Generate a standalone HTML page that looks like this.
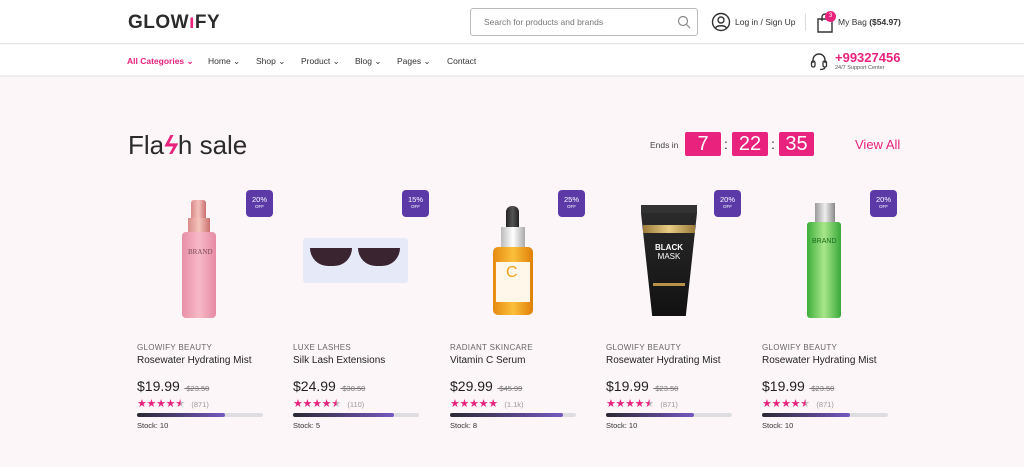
<!DOCTYPE html>
<html><head><meta charset="utf-8"><style>
*{margin:0;padding:0;box-sizing:border-box}
body{width:1024px;height:467px;overflow:hidden;background:#fdf6f9;font-family:"Liberation Sans",sans-serif;position:relative;color:#222}
.a{position:absolute}
.hdr{left:0;top:0;width:1024px;height:44px;background:#fff;border-bottom:1px solid #e6e6e6}
.nav{left:0;top:45px;width:1024px;height:32px;background:#fff;border-bottom:2px solid #eee}
.nav span{position:absolute;top:11px;font-size:8.5px;color:#333}
.badge{width:27px;height:27px;background:#5b3aa8;border-radius:4px;color:#fff;text-align:center;font-size:7.5px;padding-top:5px;line-height:9px}
.badge small{display:block;font-size:4.5px;line-height:6px}
.brand{font-size:8px;color:#666;letter-spacing:.3px}
.name{font-size:10px;color:#222}
.price{font-size:14px;color:#222}
.old{font-size:7.5px;color:#777;text-decoration:line-through}
.stars{font-size:11px;color:#e8227d;letter-spacing:-.3px;font-family:"DejaVu Sans",sans-serif}
.half{background:linear-gradient(90deg,#e8227d 55%,#bbb 55%);-webkit-background-clip:text;background-clip:text;color:transparent}
.cnt{font-size:7.5px;color:#999}
.bar{width:126px;height:4px;border-radius:2px;background:#dddde2}
.bar i{display:block;height:4px;border-radius:2px;background:linear-gradient(90deg,#2a2a33,#7657c0)}
.stock{font-size:7.5px;color:#333}
.cd{top:132px;height:24px;background:#e8227d;color:#fff;font-size:20px;text-align:center;line-height:24px;border-radius:2px}
</style></head><body>
<div class="a hdr"></div>
<div class="a" style="left:128px;top:12px;font-size:19px;font-weight:bold;color:#2b2b2b;letter-spacing:.5px">GLOW<span style="color:#e8227d">ı</span>FY</div>
<div class="a" style="left:470px;top:8px;width:228px;height:28px;border:1px solid #bbb;border-radius:3px"></div>
<div class="a" style="left:484px;top:17px;font-size:8.5px;color:#777">Search for products and brands</div>
<svg class="a" style="left:677px;top:15px" width="14" height="14" viewBox="0 0 14 14"><circle cx="6" cy="6" r="4.5" fill="none" stroke="#888" stroke-width="1.2"/><path d="M9.5 9.5L13 13" stroke="#888" stroke-width="1.2"/></svg>
<svg class="a" style="left:711px;top:12px" width="20" height="20" viewBox="0 0 20 20"><circle cx="10" cy="10" r="8.5" fill="none" stroke="#333" stroke-width="1.4"/><circle cx="10" cy="8" r="3" fill="none" stroke="#333" stroke-width="1.4"/><path d="M4.5 16c1.5-3 9.5-3 11 0" fill="none" stroke="#333" stroke-width="1.4"/></svg>
<div class="a" style="left:735px;top:17px;font-size:8.5px;color:#333">Log in / Sign Up</div>
<div class="a" style="left:805px;top:14px;width:1px;height:17px;background:#ddd"></div>
<svg class="a" style="left:816px;top:13px" width="18" height="20" viewBox="0 0 18 20"><path d="M2 6h14v13H2z" fill="none" stroke="#333" stroke-width="1.4"/><path d="M6 8V4a3 3 0 0 1 6 0v4" fill="none" stroke="#333" stroke-width="1.4"/></svg>
<div class="a" style="left:825px;top:11px;width:11px;height:11px;border-radius:50%;background:#e8227d;color:#fff;font-size:6px;text-align:center;line-height:11px">3</div>
<div class="a" style="left:838px;top:17px;font-size:8.5px;color:#333">My Bag <b>($54.97)</b></div>
<div class="a nav">
<span style="left:127px;color:#e8227d;font-weight:bold">All Categories ⌄</span>
<span style="left:208px">Home ⌄</span>
<span style="left:256px">Shop ⌄</span>
<span style="left:301px">Product ⌄</span>
<span style="left:355px">Blog ⌄</span>
<span style="left:397px">Pages ⌄</span>
<span style="left:447px">Contact</span>
</div>
<svg class="a" style="left:810px;top:51px" width="18" height="20" viewBox="0 0 18 20"><path d="M3 12V9a6 6 0 0 1 12 0v3" fill="none" stroke="#333" stroke-width="1.4"/><rect x="1.5" y="10" width="3.5" height="6" rx="1.5" fill="none" stroke="#333" stroke-width="1.3"/><rect x="13" y="10" width="3.5" height="6" rx="1.5" fill="none" stroke="#333" stroke-width="1.3"/><path d="M15 16c0 2-2 2.5-5 2.5" fill="none" stroke="#333" stroke-width="1.3"/></svg>
<div class="a" style="left:835px;top:50px;font-size:13px;font-weight:bold;color:#e8227d">+99327456</div>
<div class="a" style="left:835px;top:65px;font-size:5.5px;color:#555">24/7 Support Center</div>

<div class="a" style="left:128px;top:130px;font-size:26px;color:#2b2b2b">Fla<span style="color:#e8227d;font-style:italic;font-weight:bold">ϟ</span>h sale</div>
<div class="a" style="left:650px;top:140px;font-size:8.5px;color:#444">Ends in</div>
<div class="a cd" style="left:685px;width:36px">7</div>
<div class="a" style="left:724px;top:136px;font-size:14px;color:#333">:</div>
<div class="a cd" style="left:732px;width:36px">22</div>
<div class="a" style="left:771px;top:136px;font-size:14px;color:#333">:</div>
<div class="a cd" style="left:779px;width:35px">35</div>
<div class="a" style="left:855px;top:137px;font-size:13px;color:#e8227d">View All</div>

<div class="a" style="left:191px;top:200px;width:15px;height:20px;background:linear-gradient(90deg,#d98a88,#f4c2bb,#c9706e);border-radius:3px 3px 0 0"></div>
<div class="a" style="left:188px;top:218px;width:22px;height:14px;background:linear-gradient(90deg,#d88b88,#f6c5bd,#c9706e)"></div>
<div class="a" style="left:182px;top:232px;width:34px;height:86px;background:linear-gradient(90deg,#e78fa6,#f7b9c8,#e78aa2);border-radius:4px"></div>
<div class="a" style="left:188px;top:248px;font-size:7px;font-family:'Liberation Serif',serif;color:#7a4a55">BRAND</div>

<div class="a" style="left:303px;top:238px;width:105px;height:45px;background:#e6e9f8;border-radius:3px"></div>
<div class="a" style="left:310px;top:248px;width:42px;height:18px;background:#3a2430;border-radius:0 0 20px 20px"></div>
<div class="a" style="left:358px;top:248px;width:42px;height:18px;background:#3a2430;border-radius:0 0 20px 20px"></div>

<div class="a" style="left:506px;top:206px;width:13px;height:22px;background:linear-gradient(90deg,#222,#555,#222);border-radius:6px 6px 0 0"></div>
<div class="a" style="left:501px;top:227px;width:24px;height:20px;background:linear-gradient(90deg,#bbb,#fff,#aaa)"></div>
<div class="a" style="left:493px;top:247px;width:40px;height:68px;background:linear-gradient(90deg,#e58a10,#fbbf3c,#e08008);border-radius:5px"></div>
<div class="a" style="left:496px;top:262px;width:34px;height:40px;background:#fff7ea"></div>
<div class="a" style="left:506px;top:264px;font-size:16px;color:#f2a21b">C</div>

<div class="a" style="left:641px;top:205px;width:56px;height:8px;background:#333"></div>
<div class="a" style="left:641px;top:213px;width:56px;height:103px;background:linear-gradient(180deg,#2a2a2a,#111);clip-path:polygon(0 0,100% 0,80% 100%,20% 100%)"></div>
<div class="a" style="left:643px;top:225px;width:52px;height:8px;background:linear-gradient(90deg,#9c7a3a,#e9cc84,#9c7a3a)"></div>
<div class="a" style="left:653px;top:243px;font-size:8px;font-weight:bold;color:#fff;width:32px;text-align:center;line-height:9px">BLACK<br><span style="font-weight:normal">MASK</span></div>
<div class="a" style="left:653px;top:283px;width:32px;height:3px;background:#b8924a"></div>

<div class="a" style="left:815px;top:203px;width:20px;height:19px;background:linear-gradient(90deg,#999,#eee,#888)"></div>
<div class="a" style="left:807px;top:222px;width:34px;height:96px;background:linear-gradient(90deg,#3fae3c,#a8e68a,#3aa83a);border-radius:3px"></div>
<div class="a" style="left:812px;top:238px;font-size:7px;color:#1a6a1a">BRAND</div>

<div class="a badge" style="left:246px;top:190px">20%<small>OFF</small></div>
<div class="a badge" style="left:402px;top:190px">15%<small>OFF</small></div>
<div class="a badge" style="left:558px;top:190px">25%<small>OFF</small></div>
<div class="a badge" style="left:714px;top:190px">20%<small>OFF</small></div>
<div class="a badge" style="left:870px;top:190px">20%<small>OFF</small></div>

<div class="a" style="left:137px;top:343px">
<div class="brand">GLOWIFY BEAUTY</div><div class="name" style="margin-top:3px">Rosewater Hydrating Mist</div>
<div style="margin-top:12px"><span class="price">$19.99</span> <span class="old">&nbsp;$23.50</span></div>
<div style="line-height:13px"><span class="stars">★★★★<span class="half">★</span></span> <span class="cnt">&nbsp;(871)</span></div>
<div class="bar" style="margin-top:2px"><i style="width:88px"></i></div><div class="stock" style="margin-top:4px">Stock: 10</div></div>

<div class="a" style="left:293px;top:343px">
<div class="brand">LUXE LASHES</div><div class="name" style="margin-top:3px">Silk Lash Extensions</div>
<div style="margin-top:12px"><span class="price">$24.99</span> <span class="old">&nbsp;$30.50</span></div>
<div style="line-height:13px"><span class="stars">★★★★<span class="half">★</span></span> <span class="cnt">&nbsp;(110)</span></div>
<div class="bar" style="margin-top:2px"><i style="width:101px"></i></div><div class="stock" style="margin-top:4px">Stock: 5</div></div>

<div class="a" style="left:450px;top:343px">
<div class="brand">RADIANT SKINCARE</div><div class="name" style="margin-top:3px">Vitamin C Serum</div>
<div style="margin-top:12px"><span class="price">$29.99</span> <span class="old">&nbsp;$45.99</span></div>
<div style="line-height:13px"><span class="stars">★★★★★</span> <span class="cnt">&nbsp;(1.1k)</span></div>
<div class="bar" style="margin-top:2px"><i style="width:113px"></i></div><div class="stock" style="margin-top:4px">Stock: 8</div></div>

<div class="a" style="left:606px;top:343px">
<div class="brand">GLOWIFY BEAUTY</div><div class="name" style="margin-top:3px">Rosewater Hydrating Mist</div>
<div style="margin-top:12px"><span class="price">$19.99</span> <span class="old">&nbsp;$23.50</span></div>
<div style="line-height:13px"><span class="stars">★★★★<span class="half">★</span></span> <span class="cnt">&nbsp;(871)</span></div>
<div class="bar" style="margin-top:2px"><i style="width:88px"></i></div><div class="stock" style="margin-top:4px">Stock: 10</div></div>

<div class="a" style="left:762px;top:343px">
<div class="brand">GLOWIFY BEAUTY</div><div class="name" style="margin-top:3px">Rosewater Hydrating Mist</div>
<div style="margin-top:12px"><span class="price">$19.99</span> <span class="old">&nbsp;$23.50</span></div>
<div style="line-height:13px"><span class="stars">★★★★<span class="half">★</span></span> <span class="cnt">&nbsp;(871)</span></div>
<div class="bar" style="margin-top:2px"><i style="width:88px"></i></div><div class="stock" style="margin-top:4px">Stock: 10</div></div>
</body></html>
